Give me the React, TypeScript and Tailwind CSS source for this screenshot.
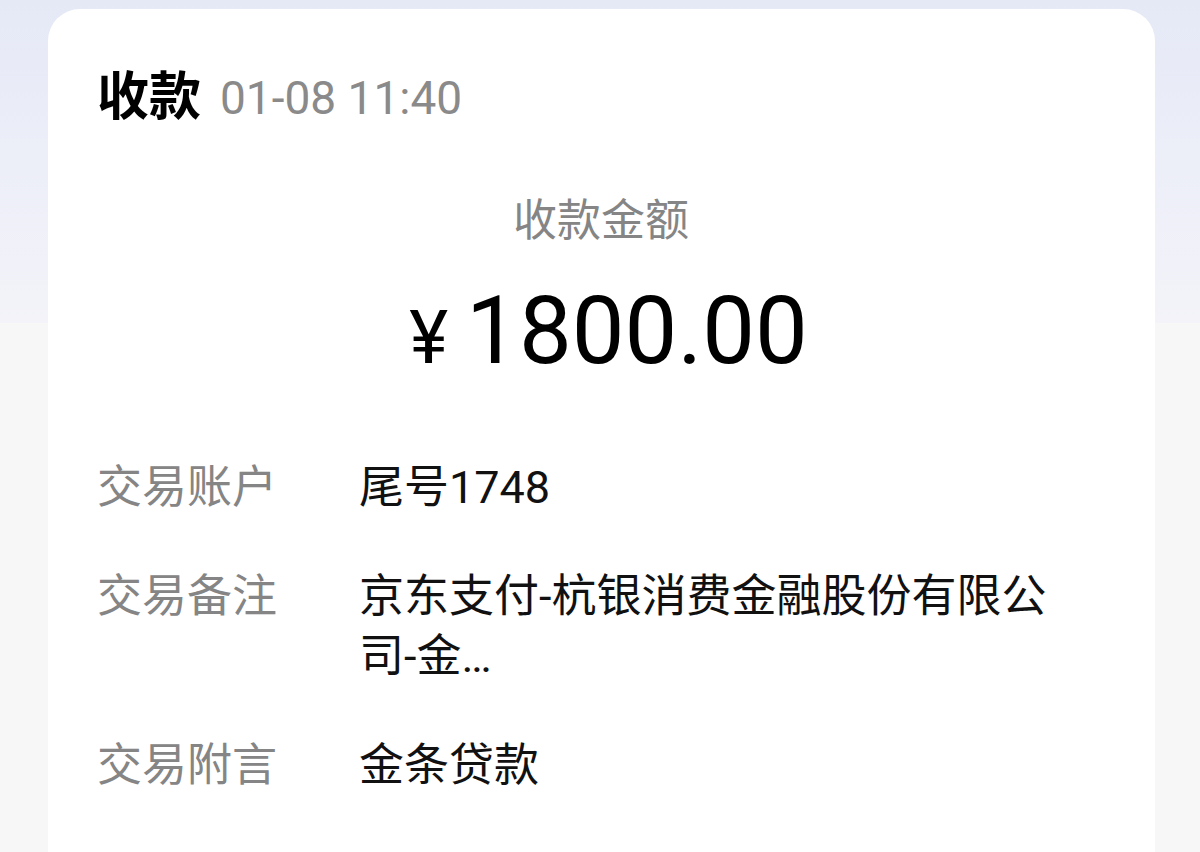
type DetailRowProps = {
  label: string;
  value: string;
};

function DetailRow({ label, value }: DetailRowProps) {
  return (
    <div className="flex items-start">
      <div className="w-[262px] shrink-0 text-[45px] leading-[60px] text-[#858585]">{label}</div>
      <div className="w-[710px] text-[45px] leading-[60px] text-[#111111]">{value}</div>
    </div>
  );
}

export default function App() {
  const rows: DetailRowProps[] = [
    { label: "交易账户", value: "尾号1748" },
    { label: "交易备注", value: "京东支付-杭银消费金融股份有限公司-金…" },
    { label: "交易附言", value: "金条贷款" },
  ];

  return (
    <div className="h-[852px] w-full overflow-hidden bg-[linear-gradient(180deg,#e5e9f6_0px,#eceef8_150px,#f3f3f9_323px,#f7f7f7_323px)] pt-[9px] font-['Roboto','Noto_Sans_CJK_SC',sans-serif]">
      <div className="ml-[48px] mr-[45px] min-h-[920px] rounded-[32px] bg-white pl-[49px] pt-[59px]">
        {/* header */}
        <div className="flex h-[60px] items-center gap-[19px]">
          <span className="text-[52px] font-bold leading-[60px] text-black">收款</span>
          <span className="text-[46px] leading-[60px] text-[#8a8a8a]">01-08 11:40</span>
        </div>

        {/* amount */}
        <div className="pr-[50px] text-center">
          <div className="mt-[63px] text-[44px] leading-[60px] text-[#858585]">收款金额</div>
          <div className="mt-[30px] flex items-baseline justify-center gap-[18px] pl-[15px] leading-[100px] text-black">
            <span className="text-[74px]">¥</span>
            <span className="text-[94px]">1800.00</span>
          </div>
        </div>

        {/* details */}
        <div className="mt-[70px] flex flex-col gap-[49px]">
          {rows.map((row) => (
            <DetailRow key={row.label} {...row} />
          ))}
        </div>
      </div>
    </div>
  );
}
